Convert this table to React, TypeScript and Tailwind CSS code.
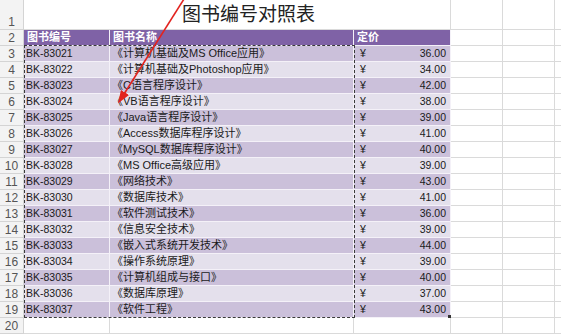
import React from "react";

const rows: [string, string, string][] = [
  ["BK-83021", "《计算机基础及MS Office应用》", "36.00"],
  ["BK-83022", "《计算机基础及Photoshop应用》", "34.00"],
  ["BK-83023", "《C语言程序设计》", "42.00"],
  ["BK-83024", "《VB语言程序设计》", "38.00"],
  ["BK-83025", "《Java语言程序设计》", "39.00"],
  ["BK-83026", "《Access数据库程序设计》", "41.00"],
  ["BK-83027", "《MySQL数据库程序设计》", "40.00"],
  ["BK-83028", "《MS Office高级应用》", "39.00"],
  ["BK-83029", "《网络技术》", "43.00"],
  ["BK-83030", "《数据库技术》", "41.00"],
  ["BK-83031", "《软件测试技术》", "36.00"],
  ["BK-83032", "《信息安全技术》", "39.00"],
  ["BK-83033", "《嵌入式系统开发技术》", "44.00"],
  ["BK-83034", "《操作系统原理》", "39.00"],
  ["BK-83035", "《计算机组成与接口》", "40.00"],
  ["BK-83036", "《数据库原理》", "37.00"],
  ["BK-83037", "《软件工程》", "43.00"],
];

const font = { fontFamily: '"Liberation Sans", "Noto Sans CJK SC", sans-serif' };

function RowHead({ n, h }: { n: number; h: string }) {
  return (
    <div
      className={`w-[24px] shrink-0 ${h} border-r border-b border-[#d4d4d4] bg-[#f3f3f3] flex items-end justify-center pb-[1px] text-[12px] leading-none text-[#555]`}
    >
      {n}
    </div>
  );
}

function EmptyTail() {
  return (
    <>
      <div className="w-[52px] shrink-0 h-full border-r border-b border-[#dadada]" />
      <div className="w-[52px] shrink-0 h-full border-r border-b border-[#dadada]" />
      <div className="flex-1 h-full border-b border-[#dadada]" />
    </>
  );
}

export default function App() {
  return (
    <div className="relative w-[561px] h-[334px] overflow-hidden bg-white" style={font}>
      {/* row 1 */}
      <div className="flex h-[30px]">
        <RowHead n={1} h="h-[30px]" />
        <div className="w-[427px] shrink-0 h-full border-r border-b border-[#dadada] pl-[158px] pt-[3px] flex items-start">
          <span className="text-[19px] leading-[20px] text-[#222]" style={{ fontFamily: '"Noto Sans CJK SC", sans-serif' }}>
            图书编号对照表
          </span>
        </div>
        <EmptyTail />
      </div>
      {/* row 2 header */}
      <div className="flex h-[16px]">
        <RowHead n={2} h="h-[16px]" />
        <div className="w-[86px] shrink-0 h-full bg-[#7f62a6] border-r border-b border-[#f4f1f8] flex items-center pl-[3px] text-[11px] font-bold text-white leading-none">
          图书编号
        </div>
        <div className="w-[244px] shrink-0 h-full bg-[#7f62a6] border-r border-b border-[#f4f1f8] flex items-center pl-[3px] text-[11px] font-bold text-white leading-none">
          图书名称
        </div>
        <div className="w-[97px] shrink-0 h-full bg-[#7f62a6] border-r border-b border-[#f4f1f8] flex items-center pl-[3px] text-[11px] font-bold text-white leading-none">
          定价
        </div>
        <EmptyTail />
      </div>
      {rows.map((r, i) => {
        const dark = i % 2 === 0;
        const bg = dark ? "bg-[#cbc0da]" : "bg-[#e4e0ec]";
        return (
          <div key={r[0]} className="flex h-[16px]">
            <RowHead n={i + 3} h="h-[16px]" />
            <div className={`w-[86px] shrink-0 h-full ${bg} border-r border-b border-[#f4f1f8] flex items-center pl-[2px] text-[10.5px] text-[#1a1a1a] leading-none`}>
              {r[0]}
            </div>
            <div className={`w-[244px] shrink-0 h-full ${bg} border-r border-b border-[#f4f1f8] flex items-center pl-[2px] text-[11px] text-[#1a1a1a] leading-none whitespace-nowrap`}>
              {r[1]}
            </div>
            <div className={`w-[97px] shrink-0 h-full ${bg} border-r border-b border-[#f4f1f8] flex items-center justify-between pl-[6px] pr-[4px] text-[10.5px] text-[#1a1a1a] leading-none`}>
              <span>¥</span>
              <span>{r[2]}</span>
            </div>
            <EmptyTail />
          </div>
        );
      })}
      {/* row 20 */}
      <div className="flex h-[16px]">
        <RowHead n={20} h="h-[16px]" />
        <div className="w-[86px] shrink-0 h-full border-r border-b border-[#dadada]" />
        <div className="w-[244px] shrink-0 h-full border-r border-b border-[#dadada]" />
        <div className="w-[97px] shrink-0 h-full border-r border-b border-[#dadada]" />
        <EmptyTail />
      </div>

      {/* copy marquee */}
      <div className="absolute left-[24px] top-[45px] w-[331px] h-[273px] border border-dashed border-[#3a3a3a] pointer-events-none" />
      {/* fill handle */}
      <div className="absolute left-[448px] top-[315px] w-[3px] h-[3px] bg-[#333]" />

      {/* arrow */}
      <svg className="absolute left-0 top-0 pointer-events-none" width="561" height="334">
        <defs>
          <marker id="ah" markerWidth="8" markerHeight="6" refX="7" refY="3" orient="auto" markerUnits="strokeWidth">
            <path d="M0,0 L8,3 L0,6 z" fill="#e2231f" />
          </marker>
        </defs>
        <line x1="184" y1="-1" x2="119" y2="102" stroke="#e2231f" strokeWidth="1.6" markerEnd="url(#ah)" />
      </svg>
    </div>
  );
}
